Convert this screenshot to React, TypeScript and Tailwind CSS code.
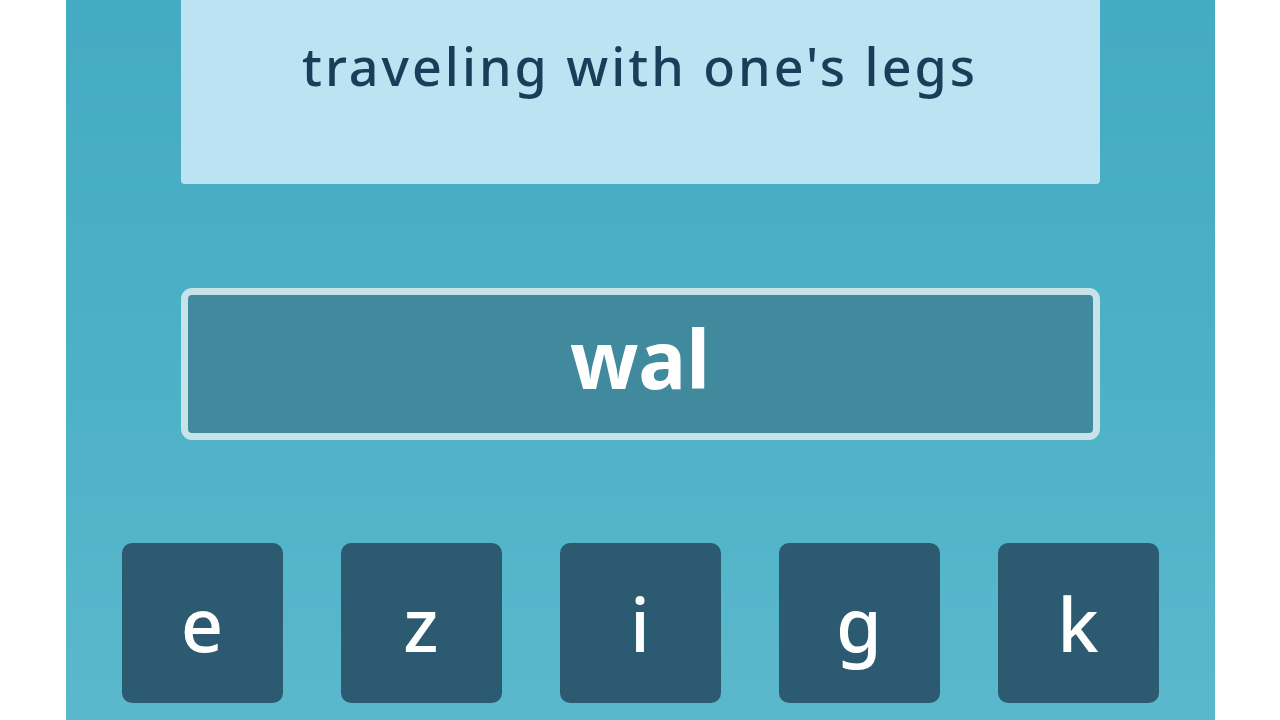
const KEYS = ['e', 'z', 'i', 'g', 'k'];

export default function App() {
  return (
    <div className="h-[720px] w-full overflow-hidden bg-white">
      <div
        className="mx-auto flex h-full w-[1149px] flex-col items-center bg-gradient-to-b from-[#45abc2] via-[#4cb1c6] to-[#5bb8cc]"
        style={{ fontFamily: '"Noto Sans", "DejaVu Sans", sans-serif' }}
      >
        {/* Clue card */}
        <div className="flex h-[184px] w-[919px] shrink-0 items-start justify-center rounded-b-[4px] bg-[#bce3f1] pt-[34px]">
          <p className="text-[52px] font-medium leading-[64px] tracking-[3px] text-[#173f5a]">
            traveling with one's legs
          </p>
        </div>

        {/* Answer box */}
        <div className="mt-[104px] flex h-[152px] w-[919px] shrink-0 items-center justify-center rounded-[11px] border-[7px] border-[#c8e2ea] bg-[#418a9e] pb-[12px]">
          <span className="text-[80px] font-bold leading-none text-white">wal</span>
        </div>

        {/* Letter keys */}
        <div className="mt-[103px] flex gap-[58px]">
          {KEYS.map(k => (
            <button
              key={k}
              className="flex h-[160px] w-[161px] items-center justify-center rounded-[10px] bg-[#2c5a70] pt-[2px] text-[74px] font-medium leading-none text-white"
            >
              {k}
            </button>
          ))}
        </div>
      </div>
    </div>
  );
}
